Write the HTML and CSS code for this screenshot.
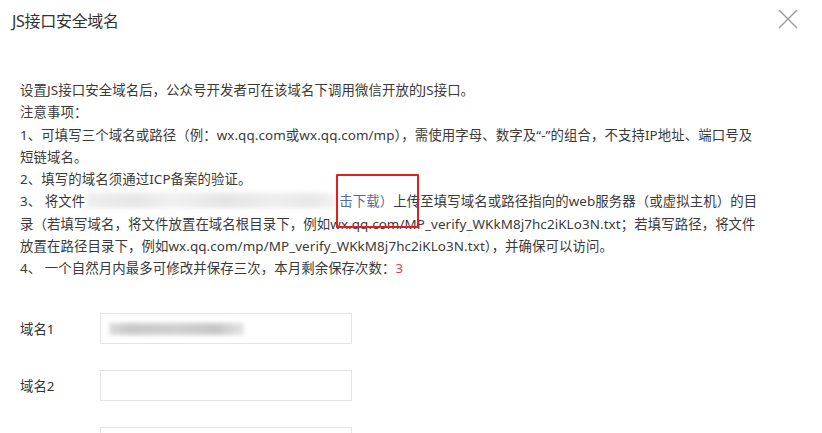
FILE: index.html
```html
<!DOCTYPE html>
<html lang="zh-CN">
<head>
<meta charset="utf-8">
<title>JS接口安全域名</title>
<link rel="stylesheet" href="styles.css">
</head>
<body>
<div class="dialog">
  <div class="dialog-hd">
    <h3 class="dialog-title">JS接口安全域名</h3>
    <svg class="close" width="20" height="20" viewBox="0 0 20 20"><path d="M1 1 L19 19 M19 1 L1 19" stroke="#9a9a9a" stroke-width="1.4" fill="none"/></svg>
  </div>
  <div class="dialog-bd">
    <div class="tips">
      <p>设置JS接口安全域名后，公众号开发者可在该域名下调用微信开放的JS接口。</p>
      <p>注意事项：</p>
      <p>1、可填写三个域名或路径（例：wx.qq.com或wx.qq.com/mp），需使用字母、数字及“-”的组合，不支持IP地址、端口号及<br>短链域名。</p>
      <p>2、填写的域名须通过ICP备案的验证。</p>
      <p class="step3">3、 将文件<span class="blur-file"></span><a class="link">击下载）</a>上传至填写域名或路径指向的web服务器（或虚拟主机）的目<br>录（若填写域名，将文件放置在域名根目录下，例如wx.qq.com/MP_verify_WKkM8j7hc2iKLo3N.txt；若填写路径，将文件<br>放置在路径目录下，例如wx.qq.com/mp/MP_verify_WKkM8j7hc2iKLo3N.txt），并确保可以访问。<span class="mark"></span></p>
      <p>4、 一个自然月内最多可修改并保存三次，本月剩余保存次数：<span class="warn">3</span></p>
    </div>
    <div class="form">
      <div class="form-row">
        <label class="form-label">域名1</label>
        <div class="input-box"><span class="blur-val"></span></div>
      </div>
      <div class="form-row">
        <label class="form-label">域名2</label>
        <div class="input-box"></div>
      </div>
      <div class="form-row">
        <label class="form-label"></label>
        <div class="input-box"></div>
      </div>
    </div>
  </div>
</div>
</body>
</html>
```
FILE: styles.css
```css
html, body {
  margin: 0;
  padding: 0;
  background: #fff;
}
body {
  font-family: "Noto Sans", "Noto Sans CJK SC", sans-serif;
  color: #353535;
  overflow: hidden;
  width: 822px;
  height: 433px;
}
.dialog {
  width: 822px;
}
.dialog-hd {
  display: flex;
  align-items: center;
  justify-content: space-between;
  height: 40px;
  padding: 0 24px 0 12px;
}
.dialog-title {
  margin: 0;
  font-size: 16px;
  font-weight: normal;
  color: #333;
  letter-spacing: -0.3px;
}
.close {
  display: block;
  margin-top: -2px;
}
.dialog-bd {
  padding: 39px 0 0 20px;
}
.tips {
  font-size: 13.4px;
  line-height: 22.3px;
  white-space: nowrap;
  color: #3a3a3a;
  letter-spacing: 0.1px;
}
.tips p {
  margin: 0;
}
.step3 {
  position: relative;
}
.blur-file {
  display: inline-block;
  width: 250px;
  height: 15px;
  margin: 0 2px;
  vertical-align: -2px;
  background: linear-gradient(90deg, #e8e8e8 0, #dedede 20%, #ececec 35%, #dcdcdc 55%, #e8e8e8 75%, #e0e0e0 90%, #f0f0f0 100%);
  filter: blur(2.5px);
  opacity: 0.75;
}
.link {
  color: #576b95;
  text-decoration: none;
}
.mark {
  position: absolute;
  left: 316px;
  top: -16px;
  width: 79px;
  height: 50px;
  border: 2px solid #e41e1e;
  border-radius: 1px;
  pointer-events: none;
}
.warn {
  color: #e64340;
}
.form {
  margin-top: 33px;
}
.form-row {
  display: flex;
  align-items: center;
  height: 31px;
  margin-bottom: 26px;
}
.form-label {
  width: 80px;
  font-size: 13.4px;
  color: #333;
}
.input-box {
  box-sizing: border-box;
  width: 252px;
  height: 31px;
  border: 1px solid #e4e4e4;
  padding: 7px 8px;
}
.blur-val {
  display: block;
  width: 135px;
  height: 12px;
  margin-top: 2px;
  background: linear-gradient(90deg, #ddd 0, #c9c9c9 15%, #d0d0d0 50%, #c6c6c6 80%, #e6e6e6 100%);
  filter: blur(2px);
}
```
